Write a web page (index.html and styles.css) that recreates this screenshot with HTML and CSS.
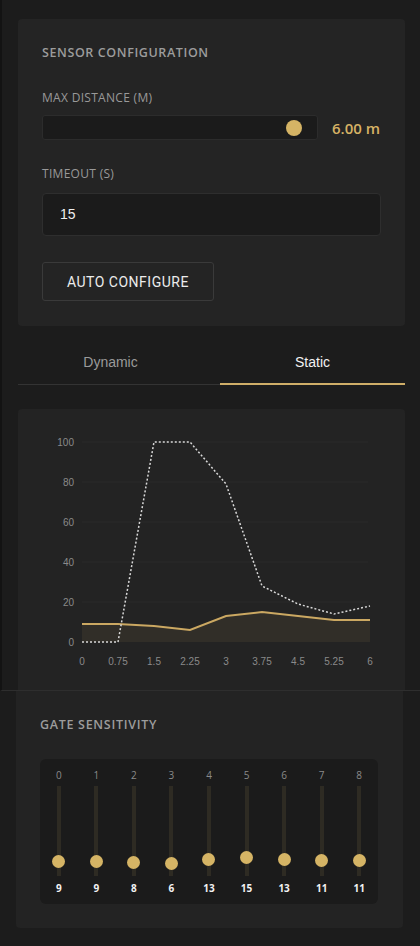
FILE: index.html
```html
<!DOCTYPE html>
<html lang="en">
<head>
    <meta charset="UTF-8">
    <meta name="viewport" content="width=device-width, initial-scale=1.0">
    <title>Sensor Settings</title>
    <link rel="stylesheet" href="styles.css">
</head>
<body>
    <div class="upper">
        <div class="card config">
            <div class="card-title">Sensor Configuration</div>

            <div class="field-label">Max Distance (m)</div>
            <div class="range-row">
                <div class="range-track">
                    <span class="range-thumb"></span>
                </div>
                <div class="range-value">6.00 m</div>
            </div>

            <div class="field-label timeout-label">Timeout (s)</div>
            <div class="text-input">15</div>

            <button class="auto-btn">Auto Configure</button>
        </div>

        <div class="tabs">
            <div class="tab">Dynamic</div>
            <div class="tab active">Static</div>
        </div>

        <div class="card chart-card">
            <svg class="chart" width="387" height="281" viewBox="0 0 387 281">
                <!-- grid -->
                <g class="grid">
                    <line x1="64" y1="33" x2="350" y2="33"/>
                    <line x1="64" y1="73" x2="350" y2="73"/>
                    <line x1="64" y1="113" x2="350" y2="113"/>
                    <line x1="64" y1="153" x2="350" y2="153"/>
                    <line x1="64" y1="193" x2="350" y2="193"/>
                </g>
                <g class="axis-y">
                    <text x="56" y="36.5">100</text>
                    <text x="56" y="76.5">80</text>
                    <text x="56" y="116.5">60</text>
                    <text x="56" y="156.5">40</text>
                    <text x="56" y="196.5">20</text>
                    <text x="56" y="236.5">0</text>
                </g>
                <g class="axis-x">
                    <text x="64" y="256">0</text>
                    <text x="100" y="256">0.75</text>
                    <text x="136" y="256">1.5</text>
                    <text x="172" y="256">2.25</text>
                    <text x="208" y="256">3</text>
                    <text x="244" y="256">3.75</text>
                    <text x="280" y="256">4.5</text>
                    <text x="316" y="256">5.25</text>
                    <text x="352" y="256">6</text>
                </g>
                <!-- gate sensitivity (static) -->
                <polygon class="sens-area" points="64,215 100,215 136,217 172,221 208,207 244,203 280,207 316,211 352,211 352,233 64,233"/>
                <polyline class="sens-line" points="64,215 100,215 136,217 172,221 208,207 244,203 280,207 316,211 352,211"/>
                <!-- measured energy -->
                <polyline class="energy-line" points="64,233 100,233 136,33 172,33 208,75 244,177 280,195 316,205 352,197"/>
            </svg>
        </div>
    </div>

    <div class="card gates">
        <div class="card-title">Gate Sensitivity</div>
        <div class="gate-panel">
            <div class="gate" style="--v: 9"><span class="gate-no">0</span><div class="gate-track"><span class="gate-thumb"></span></div><span class="gate-val">9</span></div>
            <div class="gate" style="--v: 9"><span class="gate-no">1</span><div class="gate-track"><span class="gate-thumb"></span></div><span class="gate-val">9</span></div>
            <div class="gate" style="--v: 8"><span class="gate-no">2</span><div class="gate-track"><span class="gate-thumb"></span></div><span class="gate-val">8</span></div>
            <div class="gate" style="--v: 6"><span class="gate-no">3</span><div class="gate-track"><span class="gate-thumb"></span></div><span class="gate-val">6</span></div>
            <div class="gate" style="--v: 13"><span class="gate-no">4</span><div class="gate-track"><span class="gate-thumb"></span></div><span class="gate-val">13</span></div>
            <div class="gate" style="--v: 15"><span class="gate-no">5</span><div class="gate-track"><span class="gate-thumb"></span></div><span class="gate-val">15</span></div>
            <div class="gate" style="--v: 13"><span class="gate-no">6</span><div class="gate-track"><span class="gate-thumb"></span></div><span class="gate-val">13</span></div>
            <div class="gate" style="--v: 11"><span class="gate-no">7</span><div class="gate-track"><span class="gate-thumb"></span></div><span class="gate-val">11</span></div>
            <div class="gate" style="--v: 11"><span class="gate-no">8</span><div class="gate-track"><span class="gate-thumb"></span></div><span class="gate-val">11</span></div>
        </div>
    </div>
</body>
</html>
```

FILE: styles.css
```css
body {
    margin: 0;
    padding: 0;
    width: 420px;
    background-color: #1c1c1c;
    font-family: 'Open Sans', 'Liberation Sans', sans-serif;
    color: #e8e8e8;
}

.upper {
    border-left: 2px solid #131313;
    border-bottom: 1px solid #2e2e2e;
    padding: 19px 15px 0 16px;
}

.card {
    background-color: #242424;
    border-radius: 4px;
}

.card-title {
    font-size: 12.5px;
    font-weight: 600;
    line-height: 16px;
    letter-spacing: 0.6px;
    text-transform: uppercase;
    color: #9c9c9c;
}

/* sensor configuration */
.config {
    padding: 26px 24px 25px;
}

.field-label {
    margin-top: 29px;
    font-size: 12px;
    line-height: 16px;
    letter-spacing: 0.3px;
    text-transform: uppercase;
    color: #999;
}

.timeout-label {
    margin-top: 26px;
}

.range-row {
    display: flex;
    align-items: center;
    gap: 14px;
    margin-top: 9px;
}

.range-track {
    position: relative;
    flex: 1;
    height: 23px;
    background-color: #1b1b1b;
    border: 1px solid #2c2c2c;
    border-radius: 3px;
}

.range-thumb {
    position: absolute;
    right: 15px;
    top: 4px;
    width: 16px;
    height: 16px;
    border-radius: 50%;
    background-color: #d5b465;
}

.range-value {
    width: 49px;
    font-size: 15px;
    font-weight: 600;
    color: #d6b264;
}

.text-input {
    margin-top: 11px;
    height: 41px;
    line-height: 41px;
    padding: 0 17px;
    background-color: #1b1b1b;
    border: 1px solid #2e2e2e;
    border-radius: 4px;
    font-family: 'Liberation Sans', Arial, sans-serif;
    font-size: 14px;
    color: #eee;
}

.auto-btn {
    display: block;
    margin-top: 26px;
    height: 39px;
    padding: 0 24px;
    background-color: #242424;
    border: 1px solid #3a3a3a;
    border-radius: 3px;
    font-family: Roboto, 'Liberation Sans', sans-serif;
    font-size: 14px;
    font-weight: 400;
    letter-spacing: 0.5px;
    text-transform: uppercase;
    color: #ececec;
}

/* tabs */
.tabs {
    display: flex;
    justify-content: space-between;
    margin-top: 14px;
    border-bottom: 1px solid #333;
}

.tab {
    width: 185px;
    height: 43px;
    line-height: 44px;
    text-align: center;
    font-family: 'Liberation Sans', Arial, sans-serif;
    font-size: 14px;
    color: #9a9a9a;
    border-bottom: 2px solid transparent;
    margin-bottom: -1px;
}

.tab.active {
    color: #f2f2f2;
    border-bottom-color: #cfae68;
}

/* chart */
.chart-card {
    margin-top: 24px;
    height: 281px;
    background-color: #232323;
    border-radius: 4px 4px 0 0;
}

.chart {
    display: block;
}

.grid line {
    stroke: #2b2b2b;
    stroke-width: 1;
}

.axis-y text,
.axis-x text {
    font-family: 'Liberation Sans', Arial, sans-serif;
    font-size: 10px;
    fill: #8a8a8a;
}

.axis-y text {
    text-anchor: end;
}

.axis-x text {
    text-anchor: middle;
}

.sens-area {
    fill: rgba(213, 180, 101, 0.08);
}

.sens-line {
    fill: none;
    stroke: #cba862;
    stroke-width: 2;
}

.energy-line {
    fill: none;
    stroke: #d8d8d8;
    stroke-width: 1.5;
    stroke-dasharray: 2 2;
}

/* gate sensitivity */
.gates {
    margin: 0 17px 18px 16px;
    padding: 26px 25px 24px 24px;
    background-color: #232323;
    border-radius: 0 0 4px 4px;
}

.gates .card-title {
    letter-spacing: 0.7px;
}

.gate-panel {
    display: grid;
    grid-template-columns: repeat(9, 1fr);
    margin-top: 26px;
    padding: 10px 0;
    background-color: #1b1b1b;
    border-radius: 6px;
}

.gate {
    display: flex;
    flex-direction: column;
    align-items: center;
}

.gate-no {
    font-size: 10px;
    line-height: 12px;
    color: #8a8a8a;
}

.gate-track {
    position: relative;
    width: 4px;
    height: 90px;
    margin-top: 5px;
    background-color: #2e2b23;
}

.gate-thumb {
    position: absolute;
    left: -4.5px;
    top: calc(75.5px - var(--v) * 0.67px);
    width: 13px;
    height: 13px;
    border-radius: 50%;
    background-color: #d5b465;
}

.gate-val {
    margin-top: 6px;
    font-size: 10px;
    line-height: 12px;
    font-weight: 700;
    color: #f2f2f2;
}
```
